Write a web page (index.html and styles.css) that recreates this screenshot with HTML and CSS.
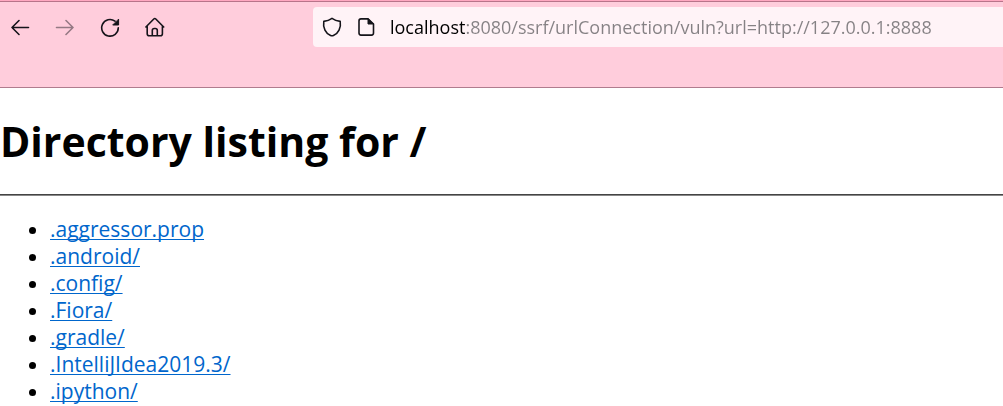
FILE: index.html
```html
<!DOCTYPE html>
<html lang="en">
<head>
<meta charset="utf-8">
<title>Directory listing for /</title>
<link rel="stylesheet" href="styles.css">
</head>
<body>
<header class="browser">
  <div class="tabstrip"></div>
  <div class="toolbar">
    <nav class="nav" aria-label="Browser">
      <button class="tool" type="button" aria-label="Back"><svg class="icon" viewBox="0 0 20 20"><path d="M18.500 10.500H2M9 3.500l-7 7 7 7"/></svg></button>
      <button class="tool" type="button" aria-label="Forward" disabled><svg class="icon" viewBox="0 0 20 20"><path d="M1.500 10.500H18M11 3.500l7 7-7 7"/></svg></button>
      <button class="tool" type="button" aria-label="Reload"><svg class="icon" viewBox="0 0 20 20"><path d="M18.300 10.800A8.300 8.300 0 1 1 15 4.200"/><path class="solid" d="M18.600 2.500v5.500h-5.500z"/></svg></button>
      <button class="tool" type="button" aria-label="Home"><svg class="icon" viewBox="0 0 20 20"><path d="M.9 10 8.800 2q1-1 2 0l7.900 8M2.200 9.200v7.600q0 2 2 2h11.200q2 0 2-2V9.200M7.300 18.500v-5q0-2 2-2h1q2 0 2 2v5"/></svg></button>
    </nav>
    <div class="address">
      <svg class="icon" viewBox="0 0 20 20"><path d="M10 1.300c2.700 1.900 5.500 2.700 8.200 3.100 1.100 6.200-1.900 12.100-6.800 14.100q-1.400.6-2.800 0C3.700 16.500.7 10.600 1.800 4.400 4.500 4 7.300 3.200 10 1.300z"/></svg>
      <svg class="icon" viewBox="0 0 20 20"><path d="M12 1.900H5q-2 0-2 2v12.200q0 2 2 2h10.500q2 0 2-2V7z"/><path class="solid" d="M12 2v5h5z"/></svg>
      <input class="url" type="text" aria-label="Address" spellcheck="false" value="localhost:8080/ssrf/urlConnection/vuln?url=http://127.0.0.1:8888">
    </div>
  </div>
</header>
<main class="page">
  <h1 class="title">Directory listing for /</h1>
  <hr class="rule">
  <ul class="files">
    <li><a href="#aggressor">.aggressor.prop</a></li>
    <li><a href="#android">.android/</a></li>
    <li><a href="#config">.config/</a></li>
    <li><a href="#fiora">.Fiora/</a></li>
    <li><a href="#gradle">.gradle/</a></li>
    <li><a href="#idea">.IntelliJIdea2019.3/</a></li>
    <li><a href="#ipython">.ipython/</a></li>
  </ul>
</main>
</body>
</html>
```
FILE: styles.css
```css
* { box-sizing: border-box; }
body {
  margin: 0;
  background: #fff;
  color: #000;
  font-family: "Open Sans", "Noto Sans", sans-serif;
}
.browser {
  background: #ffcddc;
  border-bottom: 1px solid #b07c8e;
}
.tabstrip {
  height: 2px;
  background: #ffa8c1;
  border-bottom: 1px solid #b8748a;
}
.toolbar {
  display: flex;
  align-items: center;
  gap: 148px;
  padding: 5px 0 40px 10px;
}
.nav { display: flex; gap: 25px; }
.tool {
  display: flex;
  padding: 0;
  border: 0;
  background: none;
  color: #15141a;
}
.tool:disabled { opacity: .45; }
.icon {
  flex: none;
  width: 20px;
  height: 20px;
  fill: none;
  stroke: currentColor;
  stroke-width: 1.6;
  stroke-linecap: round;
  stroke-linejoin: round;
}
.solid { fill: currentColor; stroke-width: 1; }
.address {
  display: flex;
  flex: 1;
  align-items: center;
  gap: 14px;
  height: 40px;
  padding-left: 9px;
  border-radius: 4px 0 0 4px;
  background: #fff3f7;
  color: #15141a;
}
.url {
  flex: 1;
  min-width: 0;
  height: 32px;
  padding: 0;
  border: 0;
  outline: 0;
  font: 18px/32px "Open Sans", "Noto Sans", sans-serif;
  color: #808080;
  background: linear-gradient(90deg, #000 75px, #858184 75px) text;
  -webkit-text-fill-color: transparent;
}
.title {
  margin: 0;
  padding: 24px 0;
  font-size: 41px;
  line-height: 58px;
}
.rule {
  margin: 0;
  border: 0;
  border-top: 1px solid #444;
  border-bottom: 1px solid #888;
}
.files {
  margin: 0;
  padding: 20px 0 0 50px;
  font-size: 21px;
  line-height: 27px;
}
.files a {
  color: #0066cc;
  text-underline-offset: 2px;
  text-decoration-thickness: 1px;
  text-decoration-skip-ink: none;
}
```
